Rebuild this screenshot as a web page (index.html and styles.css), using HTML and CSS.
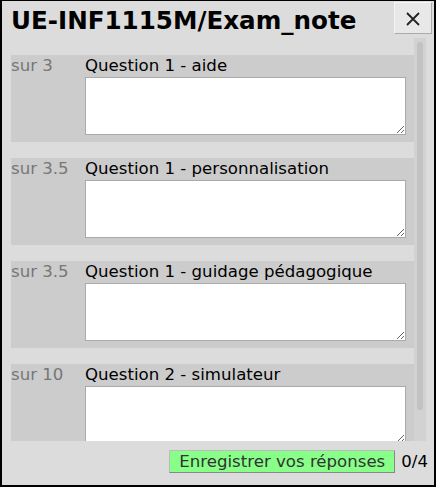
FILE: index.html
```html
<!DOCTYPE html>
<html lang="fr">
<head>
  <meta charset="UTF-8">
  <title>UE-INF1115M/Exam_note</title>
  <link rel="stylesheet" href="styles.css">
</head>
<body>
  <div class="window">
    <div class="title-bar">
      <h1>UE-INF1115M/Exam_note</h1>
      <button class="close-btn" type="button" aria-label="Fermer">
        <svg width="14" height="14" viewBox="0 0 14 14"><path d="M1 1 L13 13 M13 1 L1 13" stroke="#222" stroke-width="1.8" fill="none"/></svg>
      </button>
    </div>
    <div class="scroll-area">
      <div class="questions">
        <div class="question">
          <div class="points">sur 3</div>
          <div class="answer">
            <div class="q-title">Question 1 - aide</div>
            <textarea></textarea>
          </div>
        </div>
        <div class="question">
          <div class="points">sur 3.5</div>
          <div class="answer">
            <div class="q-title">Question 1 - personnalisation</div>
            <textarea></textarea>
          </div>
        </div>
        <div class="question">
          <div class="points">sur 3.5</div>
          <div class="answer">
            <div class="q-title">Question 1 - guidage pédagogique</div>
            <textarea></textarea>
          </div>
        </div>
        <div class="question">
          <div class="points">sur 10</div>
          <div class="answer">
            <div class="q-title">Question 2 - simulateur</div>
            <textarea></textarea>
          </div>
        </div>
      </div>
      <div class="scrollbar"><div class="thumb"></div></div>
    </div>
    <div class="footer">
      <button class="save-btn" type="button">Enregistrer vos réponses</button>
      <span class="count">0/4</span>
    </div>
  </div>
</body>
</html>
```

FILE: styles.css
```css
html, body {
  margin: 0;
  padding: 0;
  height: 100%;
}
body {
  font-family: 'DejaVu Sans', 'Liberation Sans', sans-serif;
  background: #000;
}
.window {
  box-sizing: border-box;
  width: 436px;
  height: 487px;
  border: 2px solid #000;
  border-top-width: 1px;
  background: #dcdcdc;
  display: flex;
  flex-direction: column;
}
.title-bar {
  display: flex;
  align-items: flex-start;
  justify-content: space-between;
  padding: 0 2px 0 9px;
  height: 36px;
}
h1 {
  margin: 6px 0 0 0;
  font-size: 24.6px;
  line-height: 28px;
  font-weight: 700;
  color: #000;
}
.close-btn {
  margin-top: 1px;
  width: 38px;
  height: 32px;
  background: #e8e8e8;
  border: 1px solid;
  border-color: #f6f6f6 #aaa #aaa #f6f6f6;
  padding: 2px 0 0 0;
  display: flex;
  align-items: center;
  justify-content: center;
  cursor: pointer;
}
.scroll-area {
  display: flex;
  margin: 1px 8px 0 9px;
  height: 403px;
}
.questions {
  flex: 1;
  overflow: hidden;
  padding-top: 17px;
}
.scrollbar {
  width: 12px;
  flex-shrink: 0;
  background: #d2d2d2;
  padding: 4px 3px 0 3px;
  box-sizing: border-box;
}
.thumb {
  height: 368px;
  background: #c2c2c2;
  border-radius: 4px;
}
.question {
  display: flex;
  background: #cccccc;
  margin-bottom: 16px;
  padding-bottom: 7px;
}
.points {
  width: 74px;
  flex-shrink: 0;
  color: #777;
  font-size: 16.6px;
  line-height: 22px;
}
.answer {
  flex: 1;
  padding-right: 8px;
}
.q-title {
  font-size: 16.6px;
  line-height: 22px;
  color: #000;
}
textarea {
  display: block;
  box-sizing: border-box;
  width: 100%;
  height: 58px;
  margin: 0;
  border: 1px solid #aaa;
  background: #fff;
  resize: vertical;
}
.footer {
  display: flex;
  justify-content: flex-end;
  align-items: center;
  gap: 6px;
  padding: 9px 6px 0 0;
}
.save-btn {
  font-family: 'DejaVu Sans', sans-serif;
  font-size: 16.6px;
  color: #333;
  background: #88ff88;
  border: 1px solid;
  border-color: #bbb #888 #888 #bbb;
  height: 23px;
  padding: 0 9px;
  cursor: pointer;
}
.count {
  font-size: 16.6px;
  color: #000;
}
```
